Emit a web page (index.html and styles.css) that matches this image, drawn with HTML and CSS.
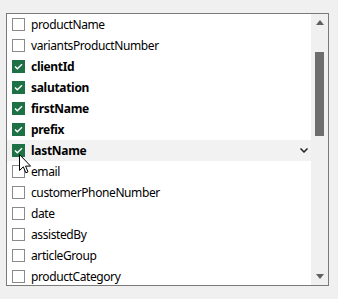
FILE: index.html
```html
<!DOCTYPE html>
<html>
<head>
<meta charset="utf-8">
<link rel="stylesheet" href="styles.css">
</head>
<body>
<div class="box">
  <div class="list">
    <div class="row"><span class="cb"></span><span class="lbl">productName</span></div>
    <div class="row"><span class="cb"></span><span class="lbl">variantsProductNumber</span></div>
    <div class="row on"><span class="cb"><svg viewBox="0 0 13 13" width="13" height="13"><path d="M3 6.5 L5.3 8.8 L10 4.2" fill="none" stroke="#fff" stroke-width="1.4"/></svg></span><span class="lbl">clientId</span></div>
    <div class="row on"><span class="cb"><svg viewBox="0 0 13 13" width="13" height="13"><path d="M3 6.5 L5.3 8.8 L10 4.2" fill="none" stroke="#fff" stroke-width="1.4"/></svg></span><span class="lbl">salutation</span></div>
    <div class="row on"><span class="cb"><svg viewBox="0 0 13 13" width="13" height="13"><path d="M3 6.5 L5.3 8.8 L10 4.2" fill="none" stroke="#fff" stroke-width="1.4"/></svg></span><span class="lbl">firstName</span></div>
    <div class="row on"><span class="cb"><svg viewBox="0 0 13 13" width="13" height="13"><path d="M3 6.5 L5.3 8.8 L10 4.2" fill="none" stroke="#fff" stroke-width="1.4"/></svg></span><span class="lbl">prefix</span></div>
    <div class="row on hover"><span class="cb"><svg viewBox="0 0 13 13" width="13" height="13"><path d="M3 6.5 L5.3 8.8 L10 4.2" fill="none" stroke="#fff" stroke-width="1.4"/></svg></span><span class="lbl">lastName</span>
      <svg class="chev" viewBox="0 0 8 5" width="8" height="5"><path d="M0.5 0.5 L4 4 L7.5 0.5" fill="none" stroke="#222" stroke-width="1.5"/></svg>
      <svg class="cursor" viewBox="0 0 13 21" width="13" height="21"><path d="M0.5 0.5 L0.5 16.5 L4.3 12.8 L6.8 18.8 L9 17.9 L6.6 12.1 L11.6 12.1 Z" fill="#fff" stroke="#000" stroke-width="1" stroke-linejoin="miter"/></svg>
    </div>
    <div class="row"><span class="cb"></span><span class="lbl">email</span></div>
    <div class="row"><span class="cb"></span><span class="lbl">customerPhoneNumber</span></div>
    <div class="row"><span class="cb"></span><span class="lbl">date</span></div>
    <div class="row"><span class="cb"></span><span class="lbl">assistedBy</span></div>
    <div class="row"><span class="cb"></span><span class="lbl">articleGroup</span></div>
    <div class="row"><span class="cb"></span><span class="lbl">productCategory</span></div>
  </div>
  <div class="sbar">
    <div class="arr up"></div>
    <div class="track"><div class="thumb"></div></div>
    <div class="arr down"></div>
  </div>
</div>
</body>
</html>
```
FILE: styles.css
```css
html, body { margin: 0; padding: 0; }
body {
  background: #f0f0f0;
  width: 338px;
  height: 299px;
  overflow: hidden;
  font-family: "Noto Sans", "Open Sans", sans-serif;
  font-size: 12px;
  color: #000;
}
.box {
  margin: 13px 0 0 6px;
  width: 321px;
  height: 271px;
  border: 1px solid #7a7a7a;
  background: #fff;
  display: flex;
  overflow: hidden;
}
.list {
  width: 304px;
  height: 271px;
  overflow: hidden;
}
.row {
  position: relative;
  height: 21px;
  display: flex;
  align-items: center;
  padding-left: 5px;
}
.row.hover { background: #f2f2f2; }
.cb {
  box-sizing: border-box;
  width: 13px;
  height: 13px;
  border: 1px solid #8a8a8a;
  background: #fff;
  margin-right: 6px;
  flex: none;
  position: relative;
}
.row.on .cb {
  border: none;
  background: #1e7145;
}
.cb svg { display: block; }
.row.on .lbl { font-weight: bold; letter-spacing: -0.3px; }
.lbl { line-height: 21px; white-space: nowrap; letter-spacing: -0.4px; }
.chev {
  position: absolute;
  left: 293px;
  top: 8px;
}
.cursor {
  position: absolute;
  left: 12px;
  top: 14px;
  z-index: 2;
}
.sbar {
  width: 17px;
  height: 271px;
  background: #f0f0f0;
  display: flex;
  flex-direction: column;
}
.arr {
  height: 17px;
  display: flex;
  align-items: center;
  justify-content: center;
  flex: none;
}
.arr.up::before {
  content: "";
  border-left: 4.5px solid transparent;
  border-right: 4.5px solid transparent;
  border-bottom: 5px solid #606060;
}
.arr.down::before {
  content: "";
  border-left: 4.5px solid transparent;
  border-right: 4.5px solid transparent;
  border-top: 5px solid #606060;
}
.track {
  flex: 1;
  padding-top: 21px;
  display: flex;
  justify-content: center;
}
.thumb {
  width: 9px;
  height: 84px;
  background: #6d6d6d;
}
```
